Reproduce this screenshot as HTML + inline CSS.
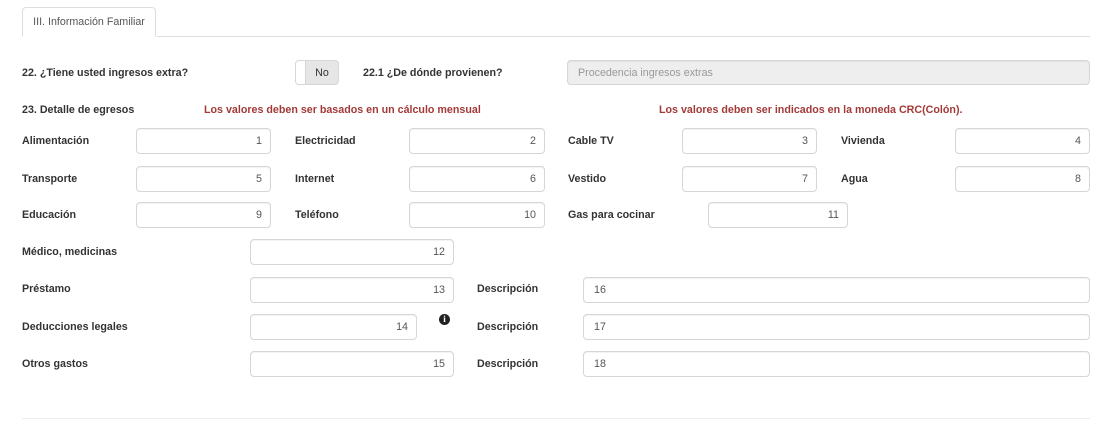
<!DOCTYPE html>
<html><head><meta charset="utf-8"><style>
body{margin:0;width:1109px;height:427px;background:#fff;position:relative;overflow:hidden;font-family:"Liberation Sans",Arial,sans-serif;font-size:10.7px;color:#333}
.a{position:absolute}
.l{position:absolute;font-weight:bold;font-size:10.7px;color:#333;line-height:14px}
.i{position:absolute;box-sizing:border-box;height:26px;border:1px solid #d6d6d6;border-radius:4px;background:#fff;font-size:10.7px;color:#555;line-height:25px;text-align:right;padding:0 8px;box-shadow:inset 0 1px 1px rgba(0,0,0,.05)}
.d{text-align:left;padding-left:10px}
.r{position:absolute;color:#a33a38;font-weight:bold;font-size:10.7px;line-height:14px}
</style></head><body>
<div class="a" style="left:157px;top:36px;width:933px;height:1px;background:#ddd"></div>
<div class="a" style="left:22px;top:7px;width:134px;height:30px;border:1px solid #ddd;border-bottom:1px solid #fff;border-radius:4px 4px 0 0;box-sizing:border-box;font-size:10.7px;color:#555;line-height:28px;text-align:center">III. Información Familiar</div>

<div class="l" style="left:22px;top:66px">22. ¿Tiene usted ingresos extra?</div>
<div class="a" style="left:295px;top:60px;width:44px;height:25px;border:1px solid #d6d6d6;border-radius:4px;box-sizing:border-box;background:#e6e6e6;overflow:hidden">
<div class="a" style="left:0;top:0;width:9px;height:23px;background:#fff;border-right:1px solid #d6d6d6"></div>
<div class="a" style="left:10px;top:0;width:32px;line-height:24px;text-align:center;color:#333">No</div></div>
<div class="l" style="left:363px;top:66px">22.1 ¿De dónde provienen?</div>
<div class="i d" style="left:567px;top:60px;width:523px;height:25px;background:#eee;color:#999;line-height:24px">Procedencia ingresos extras</div>

<div class="l" style="left:22px;top:103px">23. Detalle de egresos</div>
<div class="r" style="left:204px;top:103px">Los valores deben ser basados en un cálculo mensual</div>
<div class="r" style="left:659px;top:103px">Los valores deben ser indicados en la moneda CRC(Colón).</div>

<div class="l" style="left:22px;top:134px">Alimentación</div><div class="i" style="left:136px;top:128px;width:135px">1</div>
<div class="l" style="left:295px;top:134px">Electricidad</div><div class="i" style="left:409px;top:128px;width:136px">2</div>
<div class="l" style="left:568px;top:134px">Cable TV</div><div class="i" style="left:682px;top:128px;width:135px">3</div>
<div class="l" style="left:841px;top:134px">Vivienda</div><div class="i" style="left:955px;top:128px;width:135px">4</div>

<div class="l" style="left:22px;top:172px">Transporte</div><div class="i" style="left:136px;top:166px;width:135px">5</div>
<div class="l" style="left:295px;top:172px">Internet</div><div class="i" style="left:409px;top:166px;width:136px">6</div>
<div class="l" style="left:568px;top:172px">Vestido</div><div class="i" style="left:682px;top:166px;width:135px">7</div>
<div class="l" style="left:841px;top:172px">Agua</div><div class="i" style="left:955px;top:166px;width:135px">8</div>

<div class="l" style="left:22px;top:208px">Educación</div><div class="i" style="left:136px;top:202px;width:135px">9</div>
<div class="l" style="left:295px;top:208px">Teléfono</div><div class="i" style="left:409px;top:202px;width:136px">10</div>
<div class="l" style="left:568px;top:208px">Gas para cocinar</div><div class="i" style="left:708px;top:202px;width:140px">11</div>

<div class="l" style="left:22px;top:245px">Médico, medicinas</div><div class="i" style="left:250px;top:239px;width:204px">12</div>

<div class="l" style="left:22px;top:282px">Préstamo</div><div class="i" style="left:250px;top:277px;width:204px">13</div>
<div class="l" style="left:477px;top:282px">Descripción</div><div class="i d" style="left:583px;top:277px;width:507px">16</div>

<div class="l" style="left:22px;top:320px">Deducciones legales</div><div class="i" style="left:250px;top:314px;width:167px">14</div>
<div class="a" style="left:439px;top:314px;width:11px;height:11px;border-radius:50%;background:#222;color:#fff;font-size:9px;font-weight:bold;line-height:11px;text-align:center;font-family:'Liberation Serif',serif">i</div>
<div class="l" style="left:477px;top:320px">Descripción</div><div class="i d" style="left:583px;top:314px;width:507px">17</div>

<div class="l" style="left:22px;top:357px">Otros gastos</div><div class="i" style="left:250px;top:351px;width:204px">15</div>
<div class="l" style="left:477px;top:357px">Descripción</div><div class="i d" style="left:583px;top:351px;width:507px">18</div>

<div class="a" style="left:22px;top:418px;width:1068px;height:1px;background:#eee"></div>
</body></html>
